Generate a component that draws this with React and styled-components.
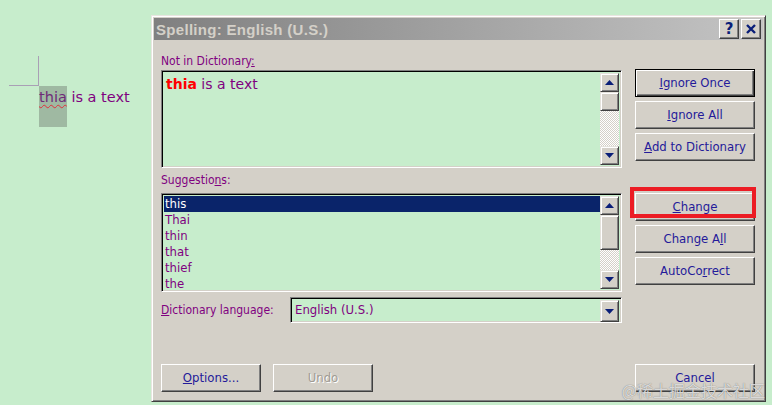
import React from 'react'
import styled, { createGlobalStyle } from 'styled-components'

const GlobalStyle = createGlobalStyle`
    html, body {
        margin: 0;
        padding: 0;
        background: #c7edcc;
        width: 772px;
        height: 405px;
        overflow: hidden;
    }
    #root {
        position: relative;
        width: 772px;
        height: 405px;
    }
`;

const Page = styled.div`
    display: flex;
    width: 772px;
    height: 405px;
    font-family: "DejaVu Sans Condensed", "DejaVu Sans", Verdana, sans-serif;
`;

// document area on the left
const DocArea = styled.div`
    width: 151px;
    flex-shrink: 0;
`;

const CropMark = styled.div`
    margin: 56px 0 0 9px;
    width: 29px;
    height: 29px;
    border-right: 1px solid #a99fb5;
    border-bottom: 1px solid #a99fb5;
`;

const DocLine = styled.div`
    margin-left: 39px;
    font-family: "DejaVu Sans", Verdana, sans-serif;
    font-size: 14.5px;
    line-height: 22px;
    color: #800080;
    white-space: nowrap;
`;

const Selected = styled.span`
    display: inline-block;
    vertical-align: top;
    height: 41px;
    background: #9fb9a2;
    color: #6e2a78;
    text-decoration: underline wavy #e0303a;
    text-decoration-thickness: 1px;
    text-underline-offset: 2px;
`;

// dialog
const Dialog = styled.div`
    margin-top: 15px;
    width: 615px;
    height: 387px;
    box-sizing: border-box;
    background: #d4d0c8;
    border: 1px solid;
    border-color: #e8e6e0 #404040 #404040 #e8e6e0;
    box-shadow: inset 1px 1px #ffffff, inset -1px -1px #808080;
    padding: 2px;
    display: flex;
    flex-direction: column;
`;

const TitleBar = styled.div`
    height: 22px;
    display: flex;
    align-items: center;
    justify-content: space-between;
    padding: 0 2px 0 2px;
    background: linear-gradient(to right, #808080, #c4c4c4);
`;

const TitleText = styled.div`
    font-family: "Liberation Sans", Arial, sans-serif;
    font-weight: bold;
    font-size: 15px;
    color: #d4d0c8;
    letter-spacing: 0.3px;
`;

const TitleButtons = styled.div`
    display: flex;
    gap: 2px;
`;

const TitleButton = styled.div`
    width: 20px;
    height: 20px;
    box-sizing: border-box;
    background: #d4d0c8;
    border: 1px solid;
    border-color: #ffffff #404040 #404040 #ffffff;
    box-shadow: inset -1px -1px #808080;
    display: flex;
    align-items: center;
    justify-content: center;
`;

const Content = styled.div`
    flex: 1;
    display: grid;
    grid-template-columns: 461px 120px;
    grid-template-rows: 21px 98px 25px 99px 31px 1fr;
    column-gap: 13px;
    padding: 9px 8px 7px 7px;
`;

const Label = styled.div`
    align-self: ${({ $align }) => $align || 'start'};
    font-size: 12px;
    line-height: 17px;
    color: #800080;
    white-space: nowrap;
`;

const Key = styled.span`
    text-decoration: underline;
    text-underline-offset: 1px;
`;

const Sunken = styled.div`
    box-sizing: border-box;
    border: 1px solid;
    border-color: #808080 #ffffff #ffffff #808080;
    box-shadow: inset 1px 1px #000000, inset -1px -1px #d4d0c8;
    background: #c7edcc;
    display: flex;
    padding: 2px;
`;

const Field = styled.div`
    flex: 1;
    padding: 2px 2px;
    font-family: "DejaVu Sans", Verdana, sans-serif;
    font-size: 14px;
    line-height: 18px;
    color: #800080;
`;

const Misspelt = styled.span`
    color: #ff0000;
    font-weight: bold;
`;

const Scrollbar = styled.div`
    width: 19px;
    display: flex;
    flex-direction: column;
`;

const ScrollButton = styled.div`
    height: ${({ $h }) => $h || 19}px;
    box-sizing: border-box;
    background: #d4d0c8;
    border: 1px solid;
    border-color: #e4e2dc #404040 #404040 #e4e2dc;
    box-shadow: inset 1px 1px #ffffff, inset -1px -1px #808080;
    display: flex;
    align-items: center;
    justify-content: center;
    flex-shrink: 0;
`;

const Track = styled.div`
    flex: 1;
    background: repeating-conic-gradient(#d4d0c8 0 25%, #ffffff 0 50%) 0 0 / 2px 2px;
`;

const List = styled.div`
    flex: 1;
    display: flex;
    flex-direction: column;
`;

const Item = styled.div`
    height: 16px;
    line-height: 16px;
    padding-left: 1px;
    font-size: 13px;
    color: ${({ $active }) => ($active ? '#ffffff' : '#800080')};
    background: ${({ $active }) => ($active ? '#0a246a' : 'transparent')};
`;

const ComboRow = styled.div`
    align-self: end;
    display: flex;
    align-items: center;
`;

const Combo = styled(Sunken)`
    margin-left: auto;
    width: 332px;
    height: 26px;
    align-items: stretch;
`;

const ComboText = styled.div`
    flex: 1;
    font-size: 13px;
    line-height: 20px;
    padding-left: 2px;
    color: #800080;
`;

const ButtonStack = styled.div`
    display: flex;
    flex-direction: column;
    gap: 4px;
    position: relative;
`;

const Button = styled.div`
    width: ${({ $w }) => $w || 120}px;
    height: 28px;
    box-sizing: border-box;
    background: #d4d0c8;
    border: 1px solid;
    border-color: ${({ $default }) => ($default ? '#000000' : '#ffffff #404040 #404040 #ffffff')};
    box-shadow: ${({ $default }) =>
        $default
            ? 'inset 1px 1px #ffffff, inset -1px -1px #404040, inset -2px -2px #808080'
            : 'inset -1px -1px #808080'};
    display: flex;
    align-items: center;
    justify-content: center;
    padding-bottom: 1px;
    font-size: 13px;
    color: ${({ $disabled }) => ($disabled ? '#a09c94' : '#241a9a')};
    text-shadow: ${({ $disabled }) => ($disabled ? '1px 1px #ffffff' : 'none')};
    white-space: nowrap;
`;

const RedBox = styled.div`
    position: absolute;
    left: -5px;
    top: -6px;
    width: 126px;
    height: 31px;
    box-sizing: border-box;
    border: 4px solid #ec1c24;
    pointer-events: none;
`;

const BottomRow = styled.div`
    align-self: end;
    display: flex;
    gap: 12px;
`;

const BottomRight = styled.div`
    align-self: end;
`;

const Watermark = styled.div`
    position: absolute;
    right: 7px;
    bottom: 6px;
    font-family: "Noto Sans CJK SC", sans-serif;
    font-size: 16px;
    line-height: 18px;
    color: rgba(245, 245, 245, 0.8);
    text-shadow: 0 0 1px rgba(70, 70, 70, 0.8);
    white-space: nowrap;
`;

const Arrow = ({ down }) => (
    <svg width="9" height="5" viewBox="0 0 9 5">
        {down
            ? <polygon points="0,0 9,0 4.5,5" fill="#0a1e78" />
            : <polygon points="0,5 9,5 4.5,0" fill="#0a1e78" />}
    </svg>
)

const HelpGlyph = styled.span`
    font: bold 15px "DejaVu Sans", sans-serif;
    color: #0a1e78;
    line-height: 16px;
`;

const CloseGlyph = () => (
    <svg width="10" height="10" viewBox="0 0 10 10">
        <path d="M1 1 L9 9 M9 1 L1 9" stroke="#0a1e78" strokeWidth="2.4" />
    </svg>
)

const suggestions = ['this', 'Thai', 'thin', 'that', 'thief', 'the']

export default function App() {
    return (
        <Page>
            <GlobalStyle />
            <DocArea>
                <CropMark />
                <DocLine>
                    <Selected>thia</Selected> is a text
                </DocLine>
            </DocArea>

            <Dialog>
                <TitleBar>
                    <TitleText>Spelling: English (U.S.)</TitleText>
                    <TitleButtons>
                        <TitleButton><HelpGlyph>?</HelpGlyph></TitleButton>
                        <TitleButton><CloseGlyph /></TitleButton>
                    </TitleButtons>
                </TitleBar>

                <Content>
                    <Label $align="end">Not in Dictionary<Key>:</Key></Label>
                    <div />

                    <Sunken>
                        <Field><Misspelt>thia</Misspelt> is a text</Field>
                        <Scrollbar>
                            <ScrollButton><Arrow /></ScrollButton>
                            <ScrollButton />
                            <Track />
                            <ScrollButton><Arrow down /></ScrollButton>
                        </Scrollbar>
                    </Sunken>
                    <ButtonStack style={{ marginTop: -1 }}>
                        <Button $default><span><Key>I</Key>gnore Once</span></Button>
                        <Button><span><Key>I</Key>gnore All</span></Button>
                        <Button><span><Key>A</Key>dd to Dictionary</span></Button>
                    </ButtonStack>

                    <Label $align="center">Suggestio<Key>n</Key>s:</Label>
                    <div />

                    <Sunken>
                        <List>
                            {suggestions.map((s, i) => (
                                <Item key={s} $active={i === 0}>{s}</Item>
                            ))}
                        </List>
                        <Scrollbar>
                            <ScrollButton><Arrow /></ScrollButton>
                            <ScrollButton $h={35} />
                            <Track />
                            <ScrollButton><Arrow down /></ScrollButton>
                        </Scrollbar>
                    </Sunken>
                    <ButtonStack>
                        <Button><span><Key>C</Key>hange</span></Button>
                        <Button><span>Change A<Key>l</Key>l</span></Button>
                        <Button><span>AutoCo<Key>r</Key>rect</span></Button>
                        <RedBox />
                    </ButtonStack>

                    <ComboRow>
                        <Label $align="center"><Key>D</Key>ictionary language:</Label>
                        <Combo>
                            <ComboText>English (U.S.)</ComboText>
                            <Scrollbar>
                                <ScrollButton $h={22}><Arrow down /></ScrollButton>
                            </Scrollbar>
                        </Combo>
                    </ComboRow>
                    <div />

                    <BottomRow>
                        <Button $w={100}><span><Key>O</Key>ptions...</span></Button>
                        <Button $w={100} $disabled>Undo</Button>
                    </BottomRow>
                    <BottomRight>
                        <Button>Cancel</Button>
                    </BottomRight>
                </Content>
            </Dialog>
            <Watermark>@稀土掘金技术社区</Watermark>
        </Page>
    )
}
